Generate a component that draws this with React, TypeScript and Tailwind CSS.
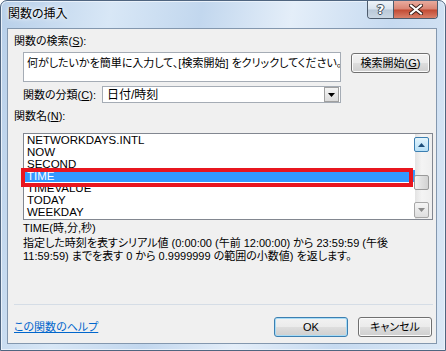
import React from 'react';

const items = ['NETWORKDAYS.INTL', 'NOW', 'SECOND', 'TIME', 'TIMEVALUE', 'TODAY', 'WEEKDAY'];

const VistaButton: React.FC<{ children: React.ReactNode; primary?: boolean; className?: string }> = ({
  children,
  primary,
  className = '',
}) => (
  <div
    className={`flex items-center justify-center whitespace-nowrap rounded-[3px] border text-[11px] leading-none text-black bg-[linear-gradient(#f2f2f2_0%,#ebebeb_48%,#dddddd_52%,#cfcfcf_100%)] ${
      primary ? 'border-[#3c7fb1] shadow-[inset_0_0_0_1px_#a8dcf6]' : 'border-[#707070] shadow-[inset_0_0_0_1px_#fbfbfb]'
    } ${className}`}
  >
    {children}
  </div>
);

const Tri: React.FC<{ up?: boolean; color: string }> = ({ up, color }) => (
  <svg width="7" height="4" viewBox="0 0 7 4">
    <path d={up ? 'M0 4 L3.5 0 L7 4 Z' : 'M0 0 L7 0 L3.5 4 Z'} fill={color} />
  </svg>
);

export default function App() {
  return (
    <div className="w-[446px] h-[351px] overflow-hidden bg-white font-['Liberation_Sans','Noto_Sans_CJK_JP',sans-serif] [font-feature-settings:'palt'] text-black">
      {/* window frame */}
      <div className="flex h-[351px] flex-col rounded-t-[7px] border border-[#4f6580] bg-[linear-gradient(100deg,#b7cfe9_0%,#d8e7f6_22%,#c2d7ee_40%,#e4eef9_58%,#c6daf0_78%,#dbe8f6_100%)] pb-[6px] pl-[6px] pr-[8px] shadow-[inset_0_0_0_1px_#e9f1fa]">
        {/* title bar */}
        <div className="flex h-[27px] items-start">
          <span className="ml-[1px] mt-[5px] text-[12px] leading-[16px] [text-shadow:0_0_6px_#ffffff,0_0_3px_#ffffff]">
            関数の挿入
          </span>
          <div className="ml-auto mr-[-1px] flex h-[18px] overflow-hidden rounded-b-[4px] border border-t-0 border-[#4d5b6c]">
            <div className="flex w-[26px] items-center justify-center border-r border-[#4d5b6c] bg-[linear-gradient(#eef3f8_0%,#d9e3ee_48%,#b9c8d8_52%,#cad7e4_100%)]">
              <span className="font-['DejaVu_Sans',sans-serif] text-[13px] font-bold leading-none text-white [text-shadow:0_0_1px_#2d3a4a,1px_0_0_#45505e,-1px_0_0_#45505e,0_1px_0_#45505e,0_-1px_0_#45505e]">
                ?
              </span>
            </div>
            <div className="flex w-[43px] items-center justify-center bg-[linear-gradient(#e9ab9e_0%,#d98473_48%,#c24a33_52%,#d9806a_100%)]">
              <svg width="14" height="11" viewBox="0 0 14 11">
                <path d="M2 1.5 L12 9.5 M12 1.5 L2 9.5" stroke="#3a1f1a" strokeWidth="4" strokeLinecap="square" />
                <path d="M2 1.5 L12 9.5 M12 1.5 L2 9.5" stroke="#ffffff" strokeWidth="2" strokeLinecap="square" />
              </svg>
            </div>
          </div>
        </div>

        {/* client area */}
        <div className="flex flex-1 flex-col whitespace-nowrap border border-[#8397ae] bg-[#f0f0f0] text-[11px]">
          <div className="ml-[6px] mt-[4px] leading-[16px]">
            関数の検索(<span className="underline">S</span>):
          </div>

          <div className="ml-[15px] mt-[3px] flex items-start">
            <div className="h-[30px] w-[318px] overflow-hidden border border-[#a5acb5] bg-white px-[3px] pt-[3px] leading-[14px]">
              何がしたいかを簡単に入力して、[検索開始] をクリックしてください。
            </div>
            <VistaButton className="ml-[10px] mt-[1px] h-[20px] w-[79px]">
              検索開始(<span className="underline">G</span>)
            </VistaButton>
          </div>

          <div className="ml-[15px] mt-[4px] flex items-center">
            <div className="w-[79px] leading-[16px]">
              関数の分類(<span className="underline">C</span>):
            </div>
            <div className="flex h-[17px] w-[239px] items-center border border-[#a5acb5] bg-white">
              <span className="flex-1 pl-[4px] text-[12px] leading-[14px]">日付/時刻</span>
              <div className="mr-[1px] flex h-[15px] w-[15px] items-center justify-center border border-[#a0a0a0] bg-[linear-gradient(#f4f4f4,#dcdcdc)]">
                <Tri color="#000000" />
              </div>
            </div>
          </div>

          <div className="ml-[6px] mt-[5px] leading-[16px]">
            関数名(<span className="underline">N</span>):
          </div>

          {/* function list */}
          <div className="relative ml-[15px] mt-[9px] flex h-[87px] w-[410px] border border-[#828790] bg-white">
            <div className="flex-1 text-[11.5px]">
              {items.map((it) => (
                <div
                  key={it}
                  className={`h-[12px] pl-[3px] leading-[12px] ${it === 'TIME' ? 'bg-[#3399ff] text-white' : ''}`}
                >
                  {it}
                </div>
              ))}
            </div>
            <div className="flex w-[17px] flex-col bg-[linear-gradient(90deg,#e3e3e3,#f4f4f4_40%,#eeeeee)] pb-[1px] pt-[3px]">
              <div className="ml-[-1px] flex h-[15px] w-[15px] items-center justify-center rounded-[2px] border border-[#3c7fb1] bg-[linear-gradient(#e3f4fc,#b7e0f7)]">
                <Tri up color="#1e4e7a" />
              </div>
              <div className="ml-[-1px] mt-[23px] h-[15px] w-[15px] rounded-[2px] border border-[#9a9a9a] bg-[linear-gradient(90deg,#f2f2f2,#e0e0e0_50%,#d2d2d2)]" />
              <div className="ml-[-1px] mt-auto flex h-[16px] w-[15px] items-center justify-center rounded-[2px] border border-[#a7a7a7] bg-[linear-gradient(#f5f5f5,#dedede)]">
                <Tri color="#8a8a8a" />
              </div>
            </div>
            {/* red highlight annotation */}
            <div className="absolute left-[-3px] top-[34px] h-[19px] w-[392px] border-4 border-[#e8161f]" />
          </div>

          <div className="ml-[15px] mt-[2px] leading-[13px]">TIME(時,分,秒)</div>
          <div className="ml-[15px] mt-[2px] leading-[13px]">
            <div>指定した時刻を表すシリアル値 (0:00:00 (午前 12:00:00) から 23:59:59 (午後</div>
            <div>11:59:59) までを表す 0 から 0.9999999 の範囲の小数値) を返します。</div>
          </div>

          <div className="flex-1" />

          <div className="ml-[6px] mr-[3px] h-px bg-[#d5dde6]" />

          <div className="mb-[6px] mt-[12px] flex h-[20px] items-center">
            <span className="ml-[6px] text-[#0066cc] underline">この関数のヘルプ</span>
            <VistaButton primary className="ml-auto h-[20px] w-[74px]">
              OK
            </VistaButton>
            <VistaButton className="ml-[10px] mr-[4px] h-[20px] w-[74px]">キャンセル</VistaButton>
          </div>
        </div>
      </div>
    </div>
  );
}
